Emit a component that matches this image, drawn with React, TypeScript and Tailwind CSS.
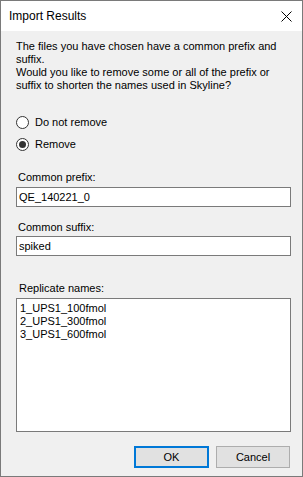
import React from 'react';

function Radio({ checked, label }: { checked?: boolean; label: string }) {
  return (
    <div className="flex items-center h-[17px]">
      <span className="w-[13px] h-[13px] rounded-full border border-[#333333] bg-white flex items-center justify-center">
        {checked && <span className="w-[7px] h-[7px] rounded-full bg-[#333333]" />}
      </span>
      <span className="ml-[6px] text-[#000]">{label}</span>
    </div>
  );
}

export default function App() {
  return (
    <div
      className="w-[303px] h-[477px] border border-[#7a7a7a] bg-[#f0f0f0] flex flex-col text-[11px] leading-[13px] text-black"
      style={{ fontFamily: '"Liberation Sans", Arial, sans-serif' }}
    >
      {/* Title bar */}
      <div className="h-[30px] bg-white flex items-center justify-between pl-[8px] pr-[9px]">
        <span className="text-[12px] text-black">Import Results</span>
        <svg width="11" height="11" viewBox="0 0 11 11" className="mr-[1px]">
          <path d="M0.5 0.5 L10.5 10.5 M10.5 0.5 L0.5 10.5" stroke="#000" strokeWidth="1" />
        </svg>
      </div>

      <div className="flex-1 flex flex-col pl-[15px] pr-[11px]">
        <p className="mt-[9px] whitespace-nowrap">
          The files you have chosen have a common prefix and
          <br />
          suffix.
          <br />
          Would you like to remove some or all of the prefix or
          <br />
          suffix to shorten the names used in Skyline?
        </p>

        <div className="mt-[22px] flex flex-col gap-[5px]">
          <Radio label="Do not remove" />
          <Radio checked label="Remove" />
        </div>

        <label className="mt-[18px] ml-[2px]">Common prefix:</label>
        <div className="mt-[3px] h-[20px] bg-white border border-[#7a7a7a] flex items-center px-[2px]">
          QE_140221_0
        </div>

        <label className="mt-[14px] ml-[2px]">Common suffix:</label>
        <div className="mt-[2px] h-[20px] bg-white border border-[#7a7a7a] flex items-center px-[2px]">
          spiked
        </div>

        <label className="mt-[26px] ml-[3px]">Replicate names:</label>
        <div className="mt-[3px] h-[134px] bg-white border border-[#7a7a7a] px-[3px] pt-[3px]">
          <div>1_UPS1_100fmol</div>
          <div>2_UPS1_300fmol</div>
          <div>3_UPS1_600fmol</div>
        </div>

        <div className="mt-[14px] flex justify-end gap-[7px] mr-[1px]">
          <button className="w-[75px] h-[22px] bg-[#e1e1e1] border-2 border-[#0078d7] text-black">OK</button>
          <button className="w-[74px] h-[22px] bg-[#e1e1e1] border border-[#adadad] text-black">Cancel</button>
        </div>
      </div>
    </div>
  );
}
